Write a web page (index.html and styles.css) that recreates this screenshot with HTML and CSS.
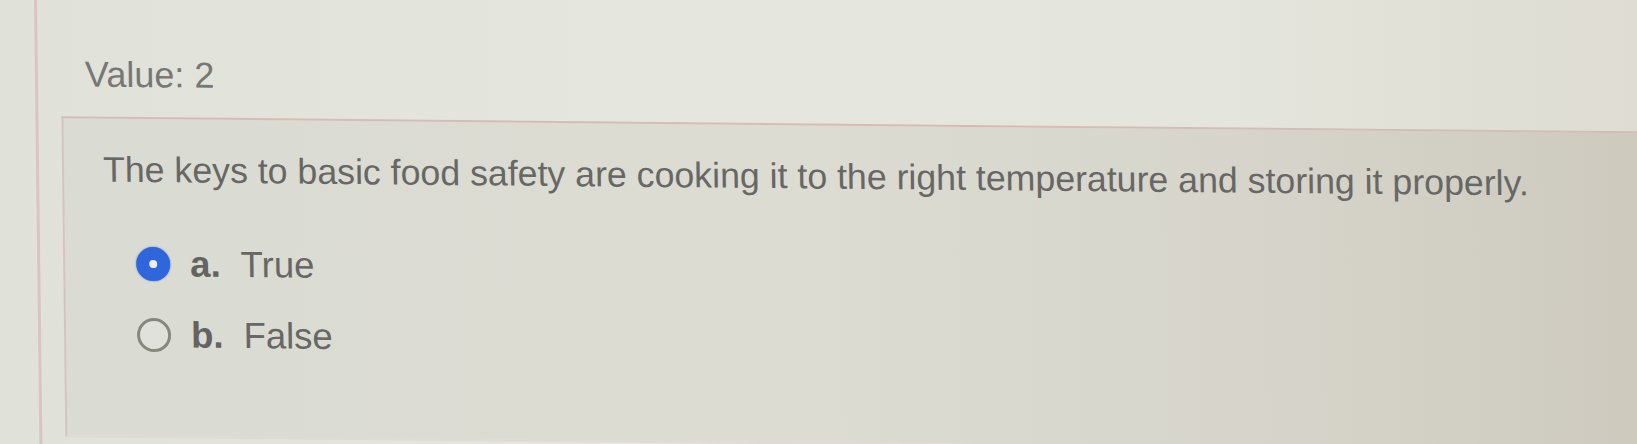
FILE: index.html
```html
<!DOCTYPE html>
<html>
<head>
  <title>Question 2</title>
  <link rel="stylesheet" href="styles.css">
</head>
<body>
  <div class="Page">
    <div class="Value">Value: 2</div>
    <div class="Question">
      <p class="Text">The keys to basic food safety are cooking it to the right temperature and storing it properly.</p>
      <div class="Answers">
        <label class="Option">
          <span class="Radio Checked"></span>
          <span class="Number">a.</span>
          <span>True</span>
        </label>
        <label class="Option">
          <span class="Radio"></span>
          <span class="Number">b.</span>
          <span>False</span>
        </label>
      </div>
    </div>
  </div>
</body>
</html>
```

FILE: styles.css
```css
*
{
  margin: 0;
  padding: 0;
  box-sizing: border-box;
}

html, body
{
  height: 100%;
  overflow: hidden;
}

body
{
  background: linear-gradient(to right, #e0e2da 0%, #e5e6de 40%, #e4e5dc 75%, #dedcd3 100%);
  font-family: "Liberation Sans", Arial, sans-serif;
  color: #676765;
}

/* the screen sits a little off square */
.Page
{
  margin-left: 34px;
  border-left: 3px solid #dcc2c2;
  min-height: 120vh;
  transform-origin: 0 0;
  transform: skew(0.7deg, 0.55deg);
}

.Value
{
  padding: 53px 0 0 47px;
  font-size: 36px;
  line-height: 42px;
  color: #777775;
}

.Question
{
  margin: 21px -60px 0 23px;
  padding: 31px 0 81px 39px;
  border: 2px solid #d8c2bf;
  border-bottom-color: #e2d8d4;
  border-top-color: #d6bcb8;
  background: linear-gradient(to right, #dadbd2 0%, #dcdcd3 45%, #d6d4ca 75%, #ccc8bc 100%);
}

.Text
{
  font-size: 35.7px;
  line-height: 40px;
}

.Answers
{
  margin-top: 54px;
  display: flex;
  flex-direction: column;
  gap: 31px;
}

.Option
{
  display: flex;
  align-items: center;
  margin-left: 32px;
  font-size: 36.5px;
  line-height: 40px;
}

.Radio
{
  width: 34px;
  height: 34px;
  border-radius: 50%;
  border: 3px solid #86877f;
  background: #e0e1da;
  margin-right: 20px;
}

.Radio.Checked
{
  border: 13px solid #2f66dc;
  background: #e8eefc;
  box-shadow: 0 0 2px #4a7ee6;
}

.Number
{
  font-weight: bold;
  color: #636361;
  margin-right: 20px;
}
```
